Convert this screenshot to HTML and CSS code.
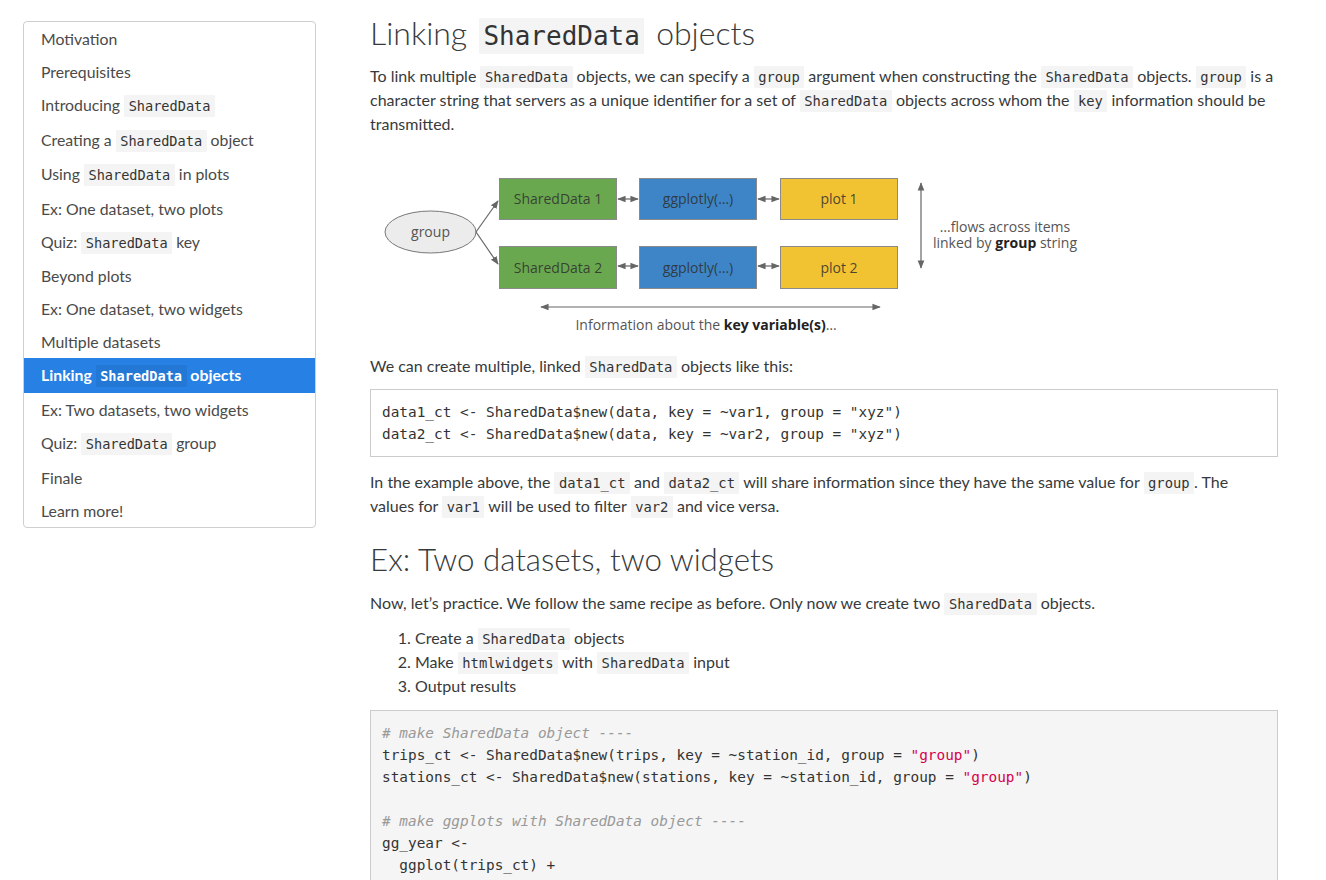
FILE: index.html
```html
<!DOCTYPE html>
<html lang="en">
<head>
<meta charset="utf-8">
<title>Linking SharedData objects</title>
<link rel="stylesheet" href="styles.css">
</head>
<body>
<div class="page">
  <nav class="toc">
    <div class="toc-item">Motivation</div>
    <div class="toc-item">Prerequisites</div>
    <div class="toc-item has-code">Introducing <code>SharedData</code></div>
    <div class="toc-item has-code">Creating a <code>SharedData</code> object</div>
    <div class="toc-item has-code">Using <code>SharedData</code> in plots</div>
    <div class="toc-item">Ex: One dataset, two plots</div>
    <div class="toc-item has-code">Quiz: <code>SharedData</code> key</div>
    <div class="toc-item">Beyond plots</div>
    <div class="toc-item">Ex: One dataset, two widgets</div>
    <div class="toc-item">Multiple datasets</div>
    <div class="toc-item has-code active">Linking <code>SharedData</code> objects</div>
    <div class="toc-item">Ex: Two datasets, two widgets</div>
    <div class="toc-item has-code">Quiz: <code>SharedData</code> group</div>
    <div class="toc-item">Finale</div>
    <div class="toc-item">Learn more!</div>
  </nav>

  <main class="main">
    <h2 class="first">Linking <code>SharedData</code> objects</h2>
    <p>To link multiple <code>SharedData</code> objects, we can specify a <code>group</code> argument when constructing the <code>SharedData</code> objects. <code>group</code> is a character string that servers as a unique identifier for a set of <code>SharedData</code> objects across whom the <code>key</code> information should be transmitted.</p>

    <svg class="diagram" width="720" height="198" viewBox="0 0 720 198" xmlns="http://www.w3.org/2000/svg">
      <defs>
        <marker id="ah" viewBox="0 0 10 10" refX="9" refY="5" markerWidth="7" markerHeight="7" orient="auto-start-reverse">
          <path d="M0 1 L10 5 L0 9 Z" fill="#666"/>
        </marker>
      </defs>
      <g class="d-text">
        <ellipse cx="60.5" cy="86" rx="45.5" ry="21" fill="#ececec" stroke="#777" stroke-width="1"/>
        <text x="60.5" y="91" text-anchor="middle" class="lbl">group</text>

        <line x1="106" y1="86" x2="128" y2="55" stroke="#666" stroke-width="1.2" marker-end="url(#ah)"/>
        <line x1="106" y1="86" x2="128" y2="118" stroke="#666" stroke-width="1.2" marker-end="url(#ah)"/>

        <rect x="129.5" y="32.5" width="117" height="41" fill="#6aa84f" stroke="#8a8a8a"/>
        <rect x="129.5" y="100.5" width="117" height="42" fill="#6aa84f" stroke="#8a8a8a"/>
        <rect x="269.5" y="32.5" width="117" height="41" fill="#3d85c6" stroke="#8a8a8a"/>
        <rect x="269.5" y="100.5" width="117" height="42" fill="#3d85c6" stroke="#8a8a8a"/>
        <rect x="410.5" y="32.5" width="117" height="41" fill="#f1c232" stroke="#8a8a8a"/>
        <rect x="410.5" y="100.5" width="117" height="42" fill="#f1c232" stroke="#8a8a8a"/>

        <text x="188" y="58" text-anchor="middle" class="box">SharedData 1</text>
        <text x="188" y="126.5" text-anchor="middle" class="box">SharedData 2</text>
        <text x="328" y="58" text-anchor="middle" class="box">ggplotly(…)</text>
        <text x="328" y="126.5" text-anchor="middle" class="box">ggplotly(…)</text>
        <text x="469" y="58" text-anchor="middle" class="box">plot 1</text>
        <text x="469" y="126.5" text-anchor="middle" class="box">plot 2</text>

        <line x1="248" y1="53" x2="268" y2="53" stroke="#666" stroke-width="1.2" marker-start="url(#ah)" marker-end="url(#ah)"/>
        <line x1="248" y1="120" x2="268" y2="120" stroke="#666" stroke-width="1.2" marker-start="url(#ah)" marker-end="url(#ah)"/>
        <line x1="388" y1="53" x2="409" y2="53" stroke="#666" stroke-width="1.2" marker-start="url(#ah)" marker-end="url(#ah)"/>
        <line x1="388" y1="120" x2="409" y2="120" stroke="#666" stroke-width="1.2" marker-start="url(#ah)" marker-end="url(#ah)"/>

        <line x1="551" y1="37" x2="551" y2="122" stroke="#666" stroke-width="1.2" marker-start="url(#ah)" marker-end="url(#ah)"/>
        <text x="635" y="86" text-anchor="middle" class="note">…flows across items</text>
        <text x="635" y="101.5" text-anchor="middle" class="note">linked by <tspan class="b">group</tspan> string</text>

        <line x1="171" y1="161" x2="510" y2="161" stroke="#666" stroke-width="1.2" marker-start="url(#ah)" marker-end="url(#ah)"/>
        <text x="336" y="184" text-anchor="middle" class="note">Information about the <tspan class="b">key variable(s)</tspan>…</text>
      </g>
    </svg>

    <p>We can create multiple, linked <code>SharedData</code> objects like this:</p>
    <pre class="code plain">data1_ct &lt;- SharedData$new(data, key = ~var1, group = "xyz")
data2_ct &lt;- SharedData$new(data, key = ~var2, group = "xyz")</pre>
    <p>In the example above, the <code>data1_ct</code> and <code>data2_ct</code> will share information since they have the same value for <code>group</code>. The values for <code>var1</code> will be used to filter <code>var2</code> and vice versa.</p>

    <h2 class="second">Ex: Two datasets, two widgets</h2>
    <p>Now, let’s practice. We follow the same recipe as before. Only now we create two <code>SharedData</code> objects.</p>
    <ol class="steps">
      <li>Create a <code>SharedData</code> objects</li>
      <li>Make <code>htmlwidgets</code> with <code>SharedData</code> input</li>
      <li>Output results</li>
    </ol>
    <pre class="code shaded"><span class="cm"># make SharedData object ----</span>
trips_ct &lt;- SharedData$new(trips, key = ~station_id, group = <span class="st">"group"</span>)
stations_ct &lt;- SharedData$new(stations, key = ~station_id, group = <span class="st">"group"</span>)

<span class="cm"># make ggplots with SharedData object ----</span>
gg_year &lt;-
  ggplot(trips_ct) +
  geom_bar(aes(x = year)) +
  theme_minimal()</pre>
  </main>
</div>
</body>
</html>
```

FILE: styles.css
```css
html, body {
  margin: 0;
  padding: 0;
  background: #ffffff;
}

body {
  font-family: Lato, "Open Sans", "Liberation Sans", sans-serif;
  font-size: 16px;
  line-height: 24px;
  color: #373a3c;
  overflow: hidden;
  height: 880px;
}

.page {
  display: flex;
  align-items: flex-start;
  gap: 54px;
  padding-left: 23px;
}

code {
  font-family: "DejaVu Sans Mono", "Liberation Mono", monospace;
  font-size: 13.8px;
  line-height: 1;
  background: #f4f4f4;
  color: #333;
  padding: 3px 4.5px;
  border-radius: 1px;
}

/* sidebar */
.toc {
  margin-top: 21px;
  width: 291px;
  flex: none;
  border: 1px solid #cfcfcf;
  border-radius: 4px;
  color: #4a4a4a;
  font-size: 15.8px;
}

.toc-item {
  padding: 6px 17px;
  height: 21px;
  line-height: 21px;
  white-space: nowrap;
}

.toc-item.has-code {
  height: 22.6px;
  line-height: 22.6px;
}

.toc-item code {
  font-size: 13.6px;
}

.toc-item.active {
  background: #2780e3;
  color: #ffffff;
  font-weight: 700;
}

.toc-item.active code {
  background: rgba(0, 0, 0, 0.06);
  color: #ffffff;
  font-weight: 700;
}

/* main column */
.main {
  width: 908px;
  flex: none;
}

h2 {
  font-weight: 300;
  font-size: 32px;
  line-height: 35px;
  margin: 0 0 14px;
  color: #373a3c;
}

h2.first {
  margin-top: 15px;
}

h2.second {
  margin-top: 24px;
  font-size: 31.3px;
}

h2 code {
  font-size: 26px;
  padding: 3px 4.5px;
  margin: 0 3px;
  font-weight: 400;
}

p {
  margin: 0 3px 10px 0;
}

.diagram {
  display: block;
  margin: 0 0 10px;
}

.d-text text {
  font-family: "Open Sans", "Noto Sans", sans-serif;
}

.d-text .lbl {
  font-size: 14px;
  fill: #555;
}

.d-text .box {
  font-size: 14px;
  fill: #2e2e2e;
  fill-opacity: 0.85;
}

.d-text .note {
  font-size: 14px;
  fill: #555;
}

.d-text .b {
  font-weight: 700;
  fill: #222;
}

.code {
  font-family: "DejaVu Sans Mono", "Liberation Mono", monospace;
  font-size: 14.4px;
  line-height: 22px;
  color: #333;
  white-space: pre;
  overflow: hidden;
}

.code.plain {
  background: #ffffff;
  border: 1px solid #cccccc;
  padding: 11px 11px;
  margin: 11px 0 13px;
}

.code.shaded {
  background: #f5f5f5;
  border: 1px solid #cccccc;
  padding: 11px 11px;
  margin: 12px 0 12px;
}

.cm {
  color: #999999;
  font-style: italic;
}

.st {
  color: #d6004c;
}

.steps {
  margin: 11px 0 12px;
  padding-left: 45px;
}
```
